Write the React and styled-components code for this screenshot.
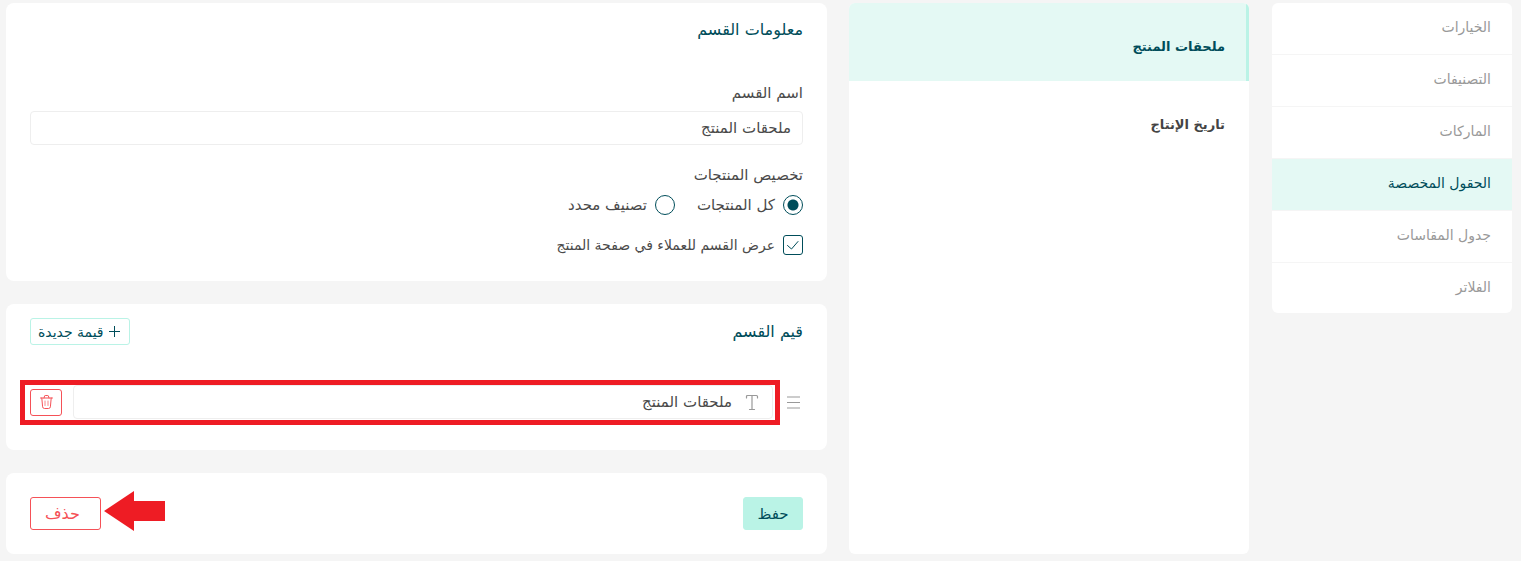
import React, { useState } from 'react';
import styled, { createGlobalStyle } from 'styled-components';

const GlobalStyle = createGlobalStyle`
  * {
    box-sizing: border-box;
  }

  body {
    margin: 0;
    background: #f5f5f5;
    color: #4a4a4a;
    font-family: 'DejaVu Sans', sans-serif;
    font-size: 15px;
    line-height: 24px;
  }

  button, input {
    font-family: inherit;
    font-size: inherit;
    color: inherit;
  }
`;

const Page = styled.div`
  display: flex;
  align-items: flex-start;
  gap: 23px;
  padding: 3px 9px 7px 6px;
`;

const SideNav = styled.nav`
  flex: 0 0 240px;
  background: #fff;
  border-radius: 6px;
  overflow: hidden;
`;

const NavLink = styled.a`
  display: block;
  padding: 12px 21px 15px;
  border-bottom: 1px solid #f5f5f5;
  font-size: 14px;
  text-decoration: none;
  color: ${({ $active }) => ($active ? '#004d5a' : '#999')};
  background: ${({ $active }) => ($active ? '#e4f9f4' : 'transparent')};

  &:last-child {
    border-bottom: 0;
    padding-bottom: 14px;
  }
`;

const Content = styled.div`
  flex: 1;
  min-width: 0;
  display: flex;
  gap: 22px;
`;

const SectionList = styled.div`
  flex: 0 0 400px;
  background: #fff;
  border-radius: 6px;
  overflow: hidden;
`;

const SectionItem = styled.button`
  display: block;
  width: 100%;
  padding: 32px 24px 22px;
  border: 0;
  border-right: ${({ $active }) => ($active ? '3px solid #baf3e6' : '0')};
  padding-right: ${({ $active }) => ($active ? '21px' : '24px')};
  background: ${({ $active }) => ($active ? '#e4f9f4' : '#fff')};
  color: ${({ $active }) => ($active ? '#004d5a' : '#444')};
  font-size: 13px;
  font-weight: 700;
  line-height: 24px;
  text-align: right;
  cursor: pointer;
`;

const Main = styled.main`
  flex: 1;
  min-width: 0;
  display: flex;
  flex-direction: column;
  gap: 23px;
`;

const Card = styled.section`
  background: #fff;
  border-radius: 8px;
  padding: 14px 24px 26px;
`;

const ValuesCard = styled(Card)`
  padding-bottom: 31px;
`;

const CardHeader = styled.div`
  display: flex;
  align-items: center;
  justify-content: space-between;
  margin-bottom: ${({ $spaced }) => ($spaced ? '40px' : '38px')};
`;

const CardTitle = styled.h2`
  margin: 0;
  font-size: 16px;
  font-weight: 400;
  line-height: 26px;
  color: #004d5a;
`;

const Label = styled.label`
  display: block;
  margin-bottom: 6px;
`;

const TextInput = styled.input`
  display: block;
  width: 100%;
  height: 34px;
  padding: 0 11px;
  border: 1px solid #eee;
  border-radius: 4px;
  background: #fff;
  outline: none;
`;

const Fieldset = styled.fieldset`
  margin: 18px 0 20px;
  padding: 0;
  border: 0;
`;

const Legend = styled.legend`
  padding: 0;
  margin-bottom: 8px;
`;

const Options = styled.div`
  display: flex;
  gap: 22px;
`;

const Option = styled.label`
  display: flex;
  align-items: center;
  gap: 8px;
  line-height: 20px;
  cursor: pointer;
`;

const CheckOption = styled(Option)`
  font-size: 14px;
`;

const Radio = styled.input`
  appearance: none;
  flex: none;
  width: 20px;
  height: 20px;
  margin: 0;
  border: 1px solid #004d5a;
  border-radius: 50%;
  background: #fff;

  &:checked {
    background: radial-gradient(circle, #004d5a 5px, #fff 6px);
  }
`;

const Tick = styled.span`
  display: grid;

  > * {
    grid-area: 1 / 1;
  }

  svg {
    pointer-events: none;
  }
`;

const Checkbox = styled.input`
  appearance: none;
  width: 20px;
  height: 20px;
  margin: 0;
  border: 1px solid #004d5a;
  border-radius: 3px;
  background: #fff;

  &:not(:checked) + svg {
    visibility: hidden;
  }
`;

const Button = styled.button`
  display: inline-flex;
  align-items: center;
  justify-content: center;
  height: 33px;
  min-width: 60px;
  padding: 0 12px;
  border: 1px solid ${({ $danger }) => ($danger ? '#f55157' : '#baf3e6')};
  border-radius: 3px;
  background: ${({ $danger }) => ($danger ? '#fff' : '#baf3e6')};
  color: ${({ $danger }) => ($danger ? '#f55157' : '#004d5a')};
  cursor: pointer;
`;

const DeleteButton = styled(Button)`
  min-width: 70px;
  padding: 0 20px 0 14px;
  font-size: 16px;
`;

const AddButton = styled(Button)`
  height: 27px;
  padding: 0 9px 0 7px;
  gap: 5px;
  background: #fff;
  font-size: 14px;
`;

const IconButton = styled(Button)`
  flex: none;
  width: 32px;
  min-width: 0;
  height: 27px;
  padding: 0;
`;

const ValueRow = styled.div`
  display: flex;
  align-items: center;
  gap: 14px;
`;

const DragHandle = styled.span`
  display: flex;
  padding-right: 3px;
  color: #999;
  cursor: grab;
`;

const ValueField = styled.div`
  position: relative;
  flex: 1;
  display: flex;
  align-items: center;
  gap: 11px;
`;

const ValueBox = styled.div`
  flex: 1;
  display: flex;
  align-items: center;
  gap: 2px;
  height: 34px;
  padding-right: 13px;
  border: 1px solid #eee;
  border-radius: 4px;
  color: #999;

  input {
    border: 0;
    height: 30px;
    color: #4a4a4a;
  }

  svg {
    flex: none;
  }
`;

const Highlight = styled.div`
  position: absolute;
  inset: -5px -7px -6px -10px;
  border: 5px solid #ee1c24;
  pointer-events: none;
`;

const Footer = styled(Card)`
  display: flex;
  justify-content: space-between;
  padding: 24px;
`;

const DeleteWrap = styled.div`
  position: relative;
  display: flex;
`;

const Arrow = styled.svg`
  position: absolute;
  left: 74px;
  top: -6px;
  pointer-events: none;
`;

const navItems = [
  'الخيارات',
  'التصنيفات',
  'الماركات',
  'الحقول المخصصة',
  'جدول المقاسات',
  'الفلاتر',
];

const sections = ['ملحقات المنتج', 'تاريخ الإنتاج'];

function PlusIcon() {
  return (
    <svg width="11" height="11" viewBox="0 0 11 11" fill="none" stroke="currentColor" aria-hidden="true">
      <path d="M5.5 0v11M0 5.500h11" />
    </svg>
  );
}

function CheckIcon() {
  return (
    <svg width="20" height="20" viewBox="0 0 20 20" fill="none" stroke="#004d5a" strokeLinecap="round" aria-hidden="true">
      <path d="M4.500 10.500l4 3.500 6.500-7.500" />
    </svg>
  );
}

function MenuIcon() {
  return (
    <svg width="13" height="13" viewBox="0 0 13 13" fill="none" stroke="currentColor" aria-hidden="true">
      <path d="M0 1h13M0 6.500h13M0 12h13" strokeWidth="1.200" />
    </svg>
  );
}

function TypeIcon() {
  return (
    <svg width="14" height="17" viewBox="0 0 14 17" fill="none" stroke="currentColor" strokeLinecap="round" aria-hidden="true">
      <path d="M1.500 4v-1.500q0-1 1-1h9q1 0 1 1v1.500M7 1.500v14M4.500 15.500h5" strokeWidth="1.200" />
    </svg>
  );
}

function TrashIcon() {
  return (
    <svg width="13" height="14" viewBox="0 0 13 14" fill="none" stroke="currentColor" strokeLinecap="round" strokeLinejoin="round" aria-hidden="true">
      <path d="M.5 3h12M4 3l.6-2.100q.1-.4.600-.4h2.600q.5 0 .6.400L9 3M1.800 3l.8 8.800q.2 1.700 1.900 1.700h4q1.700 0 1.900-1.700L11.200 3" />
      <path d="M5 6v4.500M8 6v4.500" opacity=".7" />
    </svg>
  );
}

export default function App() {
  const [section, setSection] = useState(0);
  const [name, setName] = useState('ملحقات المنتج');
  const [value, setValue] = useState('ملحقات المنتج');
  const [scope, setScope] = useState('all');
  const [visible, setVisible] = useState(true);

  return (
    <>
      <GlobalStyle />
      <Page dir="rtl" lang="ar">
        <SideNav>
          {navItems.map((item, i) => (
            <NavLink key={item} href="#" $active={i === 3}>
              {item}
            </NavLink>
          ))}
        </SideNav>

        <Content>
          <SectionList>
            {sections.map((item, i) => (
              <SectionItem key={item} type="button" $active={i === section} onClick={() => setSection(i)}>
                {item}
              </SectionItem>
            ))}
          </SectionList>

          <Main>
            <Card>
              <CardHeader>
                <CardTitle>معلومات القسم</CardTitle>
              </CardHeader>
              <Label htmlFor="section-name">اسم القسم</Label>
              <TextInput id="section-name" value={name} onChange={(e) => setName(e.target.value)} />

              <Fieldset>
                <Legend>تخصيص المنتجات</Legend>
                <Options>
                  <Option>
                    <Radio type="radio" name="scope" checked={scope === 'all'} onChange={() => setScope('all')} />
                    كل المنتجات
                  </Option>
                  <Option>
                    <Radio type="radio" name="scope" checked={scope === 'category'} onChange={() => setScope('category')} />
                    تصنيف محدد
                  </Option>
                </Options>
              </Fieldset>

              <CheckOption>
                <Tick>
                  <Checkbox type="checkbox" checked={visible} onChange={(e) => setVisible(e.target.checked)} />
                  <CheckIcon />
                </Tick>
                عرض القسم للعملاء في صفحة المنتج
              </CheckOption>
            </Card>

            <ValuesCard>
              <CardHeader $spaced>
                <CardTitle>قيم القسم</CardTitle>
                <AddButton type="button">
                  <PlusIcon />
                  قيمة جديدة
                </AddButton>
              </CardHeader>
              <ValueRow>
                <DragHandle>
                  <MenuIcon />
                </DragHandle>
                <ValueField>
                  <ValueBox>
                    <TypeIcon />
                    <TextInput aria-label="القيمة" value={value} onChange={(e) => setValue(e.target.value)} />
                  </ValueBox>
                  <IconButton type="button" $danger aria-label="حذف القيمة">
                    <TrashIcon />
                  </IconButton>
                  <Highlight />
                </ValueField>
              </ValueRow>
            </ValuesCard>

            <Footer>
              <Button type="submit">حفظ</Button>
              <DeleteWrap>
                <DeleteButton type="button" $danger>
                  حذف
                </DeleteButton>
                <Arrow width="61" height="40" viewBox="0 0 61 40" fill="#ee1c24" aria-hidden="true">
                  <path d="M0 20L30 0v10h31v20H30v10z" />
                </Arrow>
              </DeleteWrap>
            </Footer>
          </Main>
        </Content>
      </Page>
    </>
  );
}
